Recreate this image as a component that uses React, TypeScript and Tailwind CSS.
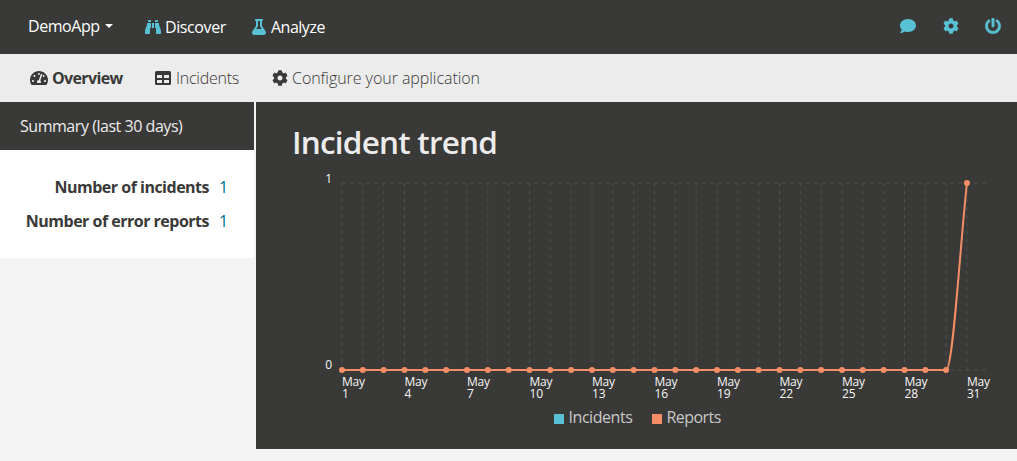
import type { ReactNode } from 'react';
import { FaBinoculars, FaCog, FaComment, FaFlask, FaPowerOff, FaTachometerAlt } from 'react-icons/fa';

const LEFT = 86;
const TOP = 81;
const BOTTOM = 268;
const STEP = 645.8 / 31;
const days = Array.from({ length: 31 }, (_, i) => i + 1);
const counts = days.map((d) => (d === 31 ? 1 : 0));
const px = (i: number) => LEFT + i * STEP;
const py = (v: number) => BOTTOM - v * (BOTTOM - TOP);

function trendPath() {
  const a = px(29);
  const b = px(30);
  return `M${px(0)},${py(0)} L${a},${py(0)} C${a + STEP / 3},${py(0)} ${b - STEP / 3},${
    py(1) + (BOTTOM - TOP) / 3
  } ${b},${py(1)}`;
}

function TableIcon() {
  return (
    <svg className="mr-[5px] size-4 shrink-0" viewBox="0 0 16 16" fill="currentColor">
      <path
        fillRule="evenodd"
        d="M1.5 1h13A1.5 1.5 0 0 1 16 2.5v11a1.5 1.5 0 0 1-1.5 1.5h-13A1.5 1.5 0 0 1 0 13.5v-11A1.5 1.5 0 0 1 1.5 1ZM2 5v3h5V5ZM9 5v3h5V5ZM2 10v3h5v-3ZM9 10v3h5v-3Z"
      />
    </svg>
  );
}

function TrendChart() {
  return (
    <svg className="block h-[347px] w-[761px]" viewBox="0 0 761 347">
      <text x="36" y="52" className="fill-[#ececec] text-[31.5px] font-semibold tracking-[-0.8px]">
        Incident trend
      </text>
      <g className="stroke-[#ececec]/12" strokeDasharray="4 4">
        {days.map((d, i) => (
          <line key={d} x1={px(i)} x2={px(i)} y1={TOP} y2={BOTTOM} />
        ))}
        <line x1={LEFT} x2={LEFT + 645.8} y1={TOP} y2={TOP} />
        <line x1={LEFT} x2={LEFT + 645.8} y1={BOTTOM} y2={BOTTOM} />
      </g>
      <g className="fill-[#f6f6f6] text-[12px]">
        <text x="76" y="80.5" textAnchor="end">1</text>
        <text x="76" y="267" textAnchor="end">0</text>
        {days.map((d, i) =>
          i % 3 === 0 ? (
            <text key={d} y="284" className="tracking-[-0.2px]">
              <tspan x={px(i)}>May</tspan>
              <tspan x={px(i)} dy="12">{d}</tspan>
            </text>
          ) : null,
        )}
      </g>
      <path d={trendPath()} fill="none" className="stroke-[#f58e67]" strokeWidth="2" />
      {counts.map((v, i) => (
        <circle key={i} cx={px(i)} cy={py(v)} r="3" className="fill-[#f58e67]" />
      ))}
      <rect x="298" y="312" width="10" height="10" className="fill-[#59c1d5]" />
      <rect x="396" y="312" width="10" height="10" className="fill-[#f58e67]" />
      <g className="fill-[#c8c8c8] text-[16px]">
        <text x="312.5" y="321" className="tracking-[-0.45px]">Incidents</text>
        <text x="410.5" y="321" className="tracking-[-0.55px]">Reports</text>
      </g>
    </svg>
  );
}

function NavItem({ icon, children, className }: { icon?: ReactNode; children: ReactNode; className: string }) {
  return (
    <a className={`flex shrink-0 items-center whitespace-nowrap ${className}`}>
      {icon}
      {children}
    </a>
  );
}

function Stat({ label, value }: { label: string; value: number }) {
  return (
    <div className="flex h-[34px] items-center justify-end">
      <span className="font-bold tracking-[-0.5px] whitespace-nowrap">{label}</span>
      <span className="w-[18px] pl-[10px] text-[#006d8f]">{value}</span>
    </div>
  );
}

export default function App() {
  return (
    <div className="h-[461px] w-[1017px] overflow-hidden bg-[#f3f3f3] font-['Open_Sans','Noto_Sans',sans-serif] text-[16px] leading-6 text-[#393937]">
      <header className="flex h-[54px] items-center bg-[#393937] pr-4 pl-7 text-white">
        <NavItem className="w-[117px] pb-[3px] tracking-[-0.45px]">
          DemoApp
          <span className="ml-[5px] border-x-[4px] border-t-[4px] border-x-transparent border-t-white" />
        </NavItem>
        <NavItem className="w-[106px] pb-px tracking-[-0.4px]" icon={<FaBinoculars className="mr-1 size-4 text-[#59c1d5]" />}>
          Discover
        </NavItem>
        <NavItem className="pb-px tracking-[-0.5px]" icon={<FaFlask className="mr-1 size-4 text-[#59c1d5]" />}>
          Analyze
        </NavItem>
        <div className="ml-auto flex items-center pb-[2px] text-[#59c1d5]">
          <FaComment className="mr-[26px] h-4 w-[18px]" />
          <FaCog className="mr-[26px] size-4" />
          <FaPowerOff className="size-4 stroke-[#59c1d5] stroke-[14px]" />
        </div>
      </header>
      <nav className="flex h-12 items-center bg-[#ececec] pl-[30px]">
        <NavItem
          className="w-[125px] font-bold tracking-[-0.65px]"
          icon={<FaTachometerAlt className="mr-1 h-4 w-[18px]" />}
        >
          Overview
        </NavItem>
        <NavItem className="w-[117px] font-light tracking-[-0.25px]" icon={<TableIcon />}>
          Incidents
        </NavItem>
        <NavItem className="font-light tracking-[-0.05px]" icon={<FaCog className="mr-1 size-4" />}>
          Configure your application
        </NavItem>
      </nav>
      <div className="flex items-start gap-[2px]">
        <aside className="w-[254px] shrink-0">
          <h2 className="flex h-12 items-center bg-[#393937] pl-5 tracking-[-0.46px] text-[#ececec]">
            Summary (last 30 days)
          </h2>
          <div className="h-[108px] bg-white pt-5 pr-[27px]">
            <Stat label="Number of incidents" value={1} />
            <Stat label="Number of error reports" value={1} />
          </div>
        </aside>
        <main className="h-[347px] w-[761px] bg-[#393937]">
          <TrendChart />
        </main>
      </div>
    </div>
  );
}
